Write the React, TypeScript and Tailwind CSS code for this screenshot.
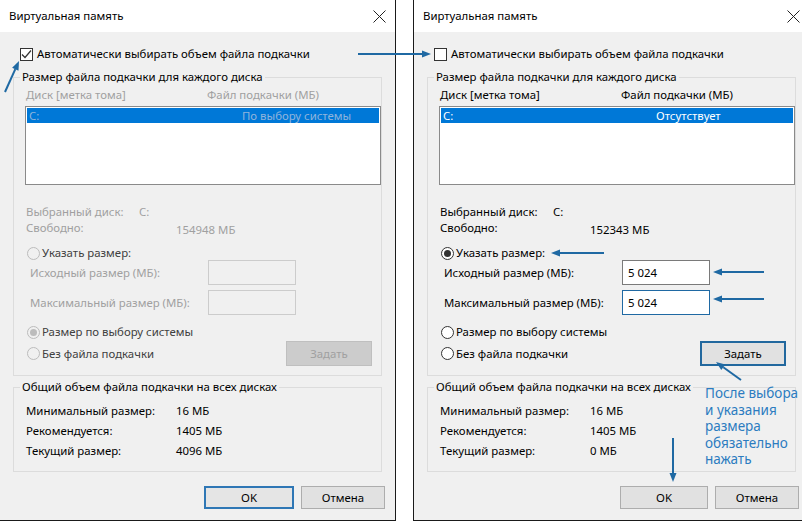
import type { ReactNode } from "react";

const BLUE = "#1f69a3";

function Arrow({ x1, y1, x2, y2 }: { x1: number; y1: number; x2: number; y2: number }) {
  const dx = x2 - x1;
  const dy = y2 - y1;
  const len = Math.hypot(dx, dy);
  const ux = dx / len;
  const uy = dy / len;
  const hl = 9;
  const hw = 3.5;
  const bx = x2 - ux * hl;
  const by = y2 - uy * hl;
  const pts = `${x2},${y2} ${bx - uy * hw},${by + ux * hw} ${bx + uy * hw},${by - ux * hw}`;
  return (
    <g>
      <line x1={x1} y1={y1} x2={bx} y2={by} stroke={BLUE} strokeWidth={2} />
      <polygon points={pts} fill={BLUE} />
    </g>
  );
}

function Radio({ checked, disabled }: { checked?: boolean; disabled?: boolean }) {
  return (
    <span
      className={`flex h-[13px] w-[13px] shrink-0 items-center justify-center rounded-full border ${
        disabled ? "border-[#bcbcbc] bg-[#f0f0f0]" : "border-[#333333] bg-white"
      }`}
    >
      {checked && (
        <span className={`h-[7px] w-[7px] rounded-full ${disabled ? "bg-[#bcbcbc]" : "bg-[#333333]"}`} />
      )}
    </span>
  );
}

function Button({ children, className }: { children: ReactNode; className: string }) {
  return <div className={`flex items-center justify-center ${className}`}>{children}</div>;
}

function Dialog({ manual }: { manual: boolean }) {
  const dim = manual ? "text-black" : "text-[#a0a0a0]";
  const radioText = manual ? "text-black" : "text-[#404040]";
  return (
    <div
      className={`flex h-[521px] w-[396px] shrink-0 flex-col border-b border-[#1a1a1a] ${
        manual ? "border-l" : "border-r"
      } bg-[#f0f0f0] text-[11.4px] text-black`}
    >
      <div className="flex h-[32px] shrink-0 items-center justify-between bg-white pl-[9px] pr-[9px]">
        <span>Виртуальная память</span>
        <svg width="13" height="13" viewBox="0 0 13 13">
          <path d="M0.5 0.5 L12.5 12.5 M12.5 0.5 L0.5 12.5" stroke="#222" strokeWidth="1" fill="none" />
        </svg>
      </div>

      <div className="flex flex-col px-[13px]">
        <div className="mt-[15px] flex h-[14px] items-center">
          <span className="ml-[7px] flex h-[13px] w-[13px] items-center justify-center border border-[#333333] bg-white">
            {!manual && (
              <svg width="11" height="11" viewBox="0 0 11 11">
                <path d="M1 5.5 L4 8.5 L10 1.5" stroke="#333" strokeWidth="1.2" fill="none" />
              </svg>
            )}
          </span>
          <span className="ml-[4px]">Автоматически выбирать объем файла подкачки</span>
        </div>

        <fieldset className="mt-[8px] border border-[#dcdcdc] pb-[9px] pl-[11px]">
          <legend className="-ml-[5px] px-[2px] leading-[16px]">Размер файла подкачки для каждого диска</legend>
          <div className={`mt-[2px] flex h-[16px] items-center ${dim}`}>
            <span className="ml-[1px] w-[181px]">Диск [метка тома]</span>
            <span>Файл подкачки (МБ)</span>
          </div>
          <div className="mt-[3px] h-[79px] border border-[#8a8a8a] bg-white px-[1px] pt-[1px]">
            <div
              className={`flex h-[15px] items-center bg-[#0078d7] ${
                manual ? "text-white" : "text-[#8fb4dc]"
              }`}
            >
              <span className="w-[215px] pl-[2px]">C:</span>
              <span>{manual ? "Отсутствует" : "По выбору системы"}</span>
            </div>
          </div>

          <div className={`mt-[19px] flex h-[16px] items-center ${dim}`}>
            <span className="ml-[1px] w-[113px]">Выбранный диск:</span>
            <span>C:</span>
          </div>
          <div className={`flex h-[16px] items-center ${dim}`}>
            <span className="ml-[1px] w-[150px]">Свободно:</span>
            <span className="pt-[3px]">{manual ? "152343 МБ" : "154948 МБ"}</span>
          </div>

          <div className={`mt-[9px] flex h-[16px] items-center ${radioText}`}>
            <span className="ml-[2px]">
              <Radio checked={manual} disabled={!manual} />
            </span>
            <span className="ml-[2px]">Указать размер:</span>
          </div>
          <div className={`-mt-[1px] flex h-[25px] items-center ${dim}`}>
            <span className="ml-[5px] w-[178px]">Исходный размер (МБ):</span>
            <span
              className={`flex h-[25px] w-[88px] items-center border pl-[5px] text-black ${
                manual ? "border-[#7a7a7a] bg-white" : "border-[#cccccc] bg-[#f0f0f0]"
              }`}
            >
              {manual ? "5 024" : ""}
            </span>
          </div>
          <div className={`mt-[5px] flex h-[25px] items-center ${dim}`}>
            <span className="ml-[5px] w-[178px]">Максимальный размер (МБ):</span>
            <span
              className={`flex h-[25px] w-[88px] items-center border pl-[5px] text-black ${
                manual ? "border-[#1f69a3] bg-white" : "border-[#cccccc] bg-[#f0f0f0]"
              }`}
            >
              {manual ? "5 024" : ""}
            </span>
          </div>

          <div className={`mt-[9px] flex h-[16px] items-center ${radioText}`}>
            <span className="ml-[2px]">
              <Radio checked={!manual} disabled={!manual} />
            </span>
            <span className="ml-[2px]">Размер по выбору системы</span>
          </div>
          <div className={`mt-[1px] flex h-[25px] items-center justify-between ${radioText}`}>
            <div className="flex items-center">
              <span className="ml-[2px]">
                <Radio disabled={!manual} />
              </span>
              <span className="ml-[2px]">Без файла подкачки</span>
            </div>
            {manual ? (
              <Button className="mr-[9px] h-[25px] w-[86px] border-2 border-[#22689e] bg-[#e1e1e1]">Задать</Button>
            ) : (
              <Button className="mr-[9px] h-[25px] w-[86px] border border-[#bfbfbf] bg-[#cccccc] text-[#a0a0a0]">
                Задать
              </Button>
            )}
          </div>
        </fieldset>

        <fieldset className="mt-[3px] border border-[#dcdcdc] pb-[10px] pl-[11px]">
          <legend className="-ml-[5px] px-[2px] leading-[16px]">Общий объем файла подкачки на всех дисках</legend>
          <div className="mt-[6px] flex h-[20px] items-center">
            <span className="ml-[1px] w-[150px]">Минимальный размер:</span>
            <span>16 МБ</span>
          </div>
          <div className="flex h-[20px] items-center">
            <span className="ml-[1px] w-[150px]">Рекомендуется:</span>
            <span>1405 МБ</span>
          </div>
          <div className="flex h-[20px] items-center">
            <span className="ml-[1px] w-[150px]">Текущий размер:</span>
            <span>{manual ? "0 МБ" : "4096 МБ"}</span>
          </div>
        </fieldset>

        <div className="-mr-[3px] mt-[14px] flex justify-end gap-[7px]">
          {manual ? (
            <Button className="h-[23px] w-[88px] border border-[#adadad] bg-[#e1e1e1]">OK</Button>
          ) : (
            <Button className="h-[23px] w-[90px] border-2 border-[#2f77b5] bg-[#e5e5e5]">OK</Button>
          )}
          <Button className="h-[23px] w-[84px] border border-[#adadad] bg-[#e1e1e1]">Отмена</Button>
        </div>
      </div>
    </div>
  );
}

export default function App() {
  return (
    <div className="relative flex h-[523px] w-[802px] gap-[17px] overflow-hidden bg-white font-['Noto_Sans',sans-serif]">
      <Dialog manual={false} />
      <Dialog manual />

      <svg className="pointer-events-none absolute inset-0" width="802" height="523" viewBox="0 0 802 523">
        <Arrow x1={5} y1={92} x2={19} y2={61} />
        <Arrow x1={358} y1={54} x2={431} y2={54} />
        <Arrow x1={604} y1={253} x2={551} y2={253} />
        <Arrow x1={764} y1={272} x2={713} y2={272} />
        <Arrow x1={764} y1={299} x2={713} y2={299} />
        <Arrow x1={741} y1={380} x2={716} y2={362} />
        <Arrow x1={673} y1={438} x2={673} y2={482} />
      </svg>

      <div className="absolute left-[705px] top-[385px] whitespace-nowrap text-[13.5px] leading-[16.5px] text-[#2c7cc0]">
        <div>После выбора</div>
        <div>и указания</div>
        <div>размера</div>
        <div>обязательно</div>
        <div>нажать</div>
      </div>
    </div>
  );
}
